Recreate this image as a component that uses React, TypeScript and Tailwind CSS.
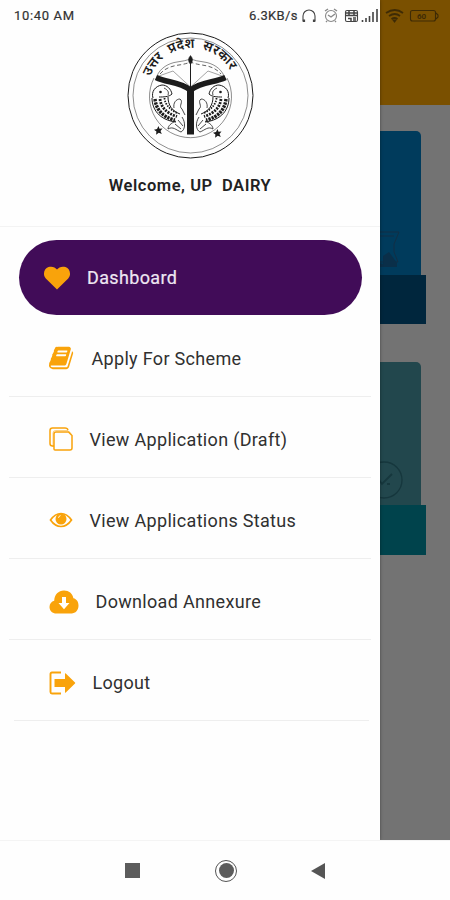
import type { ReactNode } from "react";

const ORANGE = "#f9a30b";

function Emblem() {
  return (
    <svg width="128" height="128" viewBox="0 0 128 128" className="text-[#1c1c1c]" fill="none" stroke="currentColor">
      <defs>
        <path id="motto" d="M24.500 44.500 A44 44 0 0 1 108 48" />
        <g id="fish">
          <path d="M27 66 C25 60 29 54 36 53 C41 53 45 57 46 62 C43 65 37 65 33 65" strokeWidth="1" />
          <circle cx="34.500" cy="60" r="1.300" fill="currentColor" stroke="none" />
          <path d="M38 56 C42 58 43 60 42 63" strokeWidth=".8" />
          <path d="M26 66 C26 77 33 88 50 90" strokeWidth="1" />
          <path d="M42 65 C42 73 46 79 54 82" strokeWidth="1" />
          <path d="M29 67 C30 77 36 85 49 88" strokeWidth="3.400" strokeDasharray="2.400 .9" />
          <path d="M34 67 C35 75 40 81 51 84.500" strokeWidth="2.800" strokeDasharray="2 1.100" />
          <path d="M38.500 66 C39 72 43 77 51 81" strokeWidth="1.800" strokeDasharray="1.500 1.200" />
          <path d="M48 76 C47 71 50 67 54 67 C58 70 52 74 56 77 L59 83" strokeWidth=".8" />
          <path d="M50 89 C45 91 42 94 42 97 C47 94 50 98 55 100 C59 98 60 91 56 85" strokeWidth=".8" />
          <path d="M49 92 L55 97 M52 88 L57 94" strokeWidth=".8" />
        </g>
      </defs>
      <circle cx="64.500" cy="63.500" r="62.500" strokeWidth="1" />
      <circle cx="64.500" cy="63.500" r="57.500" strokeWidth=".5" />
      <path d="M28 46 A41 41 0 1 0 101 46" strokeWidth=".5" />
      <text className="fill-[#1c1c1c] stroke-none text-[13.500px] font-semibold [font-family:'Noto_Sans_Devanagari','Noto_Sans',sans-serif] [word-spacing:4px]">
        <textPath href="#motto">उत्तर प्रदेश सरकार</textPath>
      </text>
      <path d="M31 44 C34 36 43 31 51 30 Q59 29 64.500 27 Q70 29 78 30 C86 31 95 36 98 44" strokeWidth=".5" />
      <path d="M34 42 C39 36 46 34 53 33 Q60 32 64.500 30 Q69 32 76 33 C83 34 90 36 95 42" strokeWidth=".7" strokeDasharray="4 2.500" />
      <path d="M30 45 L47 39 M99 45 L82 39 M47 39 L64.500 55 L82 39" strokeWidth=".4" />
      <path d="M64.500 30 V60" strokeWidth="1" />
      <path d="M64.500 23.500 Q68.500 28 64.500 32.500 Q60.500 28 64.500 23.500Z" fill="currentColor" strokeWidth=".5" />
      <path d="M30 45.500 C41 51 52 49 64.500 58 C77 49 88 51 99.500 45.500" strokeWidth="5.500" />
      <path d="M64.500 56 V102.500" strokeWidth="7" />
      <use href="#fish" />
      <use href="#fish" transform="matrix(-1 0 0 1 129 0)" />
      <g fill="currentColor" stroke="none">
        <path d="m32.500 94 1 2.700 3-.2-2 2.400 1.300 3-3-1.200-2.700 2 .3-3.300-2.400-1.700 3-.6zM91.500 97l1 2.700 3-.2-2 2.400 1.300 3-3-1.200-2.700 2 .3-3.300-2.400-1.700 3-.6z" />
      </g>
    </svg>
  );
}

function HeartIcon() {
  return (
    <svg width="28" height="26" viewBox="0 0 28 26" fill={ORANGE}>
      <path d="M14 24.500 L2.800 13.400 C-.6 9.800 1 3.600 5.500 2.100 C9 .9 12.200 2.300 14 4.500 C15.800 2.300 19 .9 22.500 2.100 C27 3.600 28.600 9.800 25.200 13.400Z" />
    </svg>
  );
}

function BookIcon() {
  return (
    <svg width="26" height="26" viewBox="0 0 1792 1792" fill={ORANGE}>
      <path d="M1639 478q40 57 18 129l-275 906q-19 64-76.500 107.500t-122.500 43.500h-923q-77 0-148.500-53.500t-99.500-131.500q-24-67-2-127 0-4 3-27t4-37q1-8-3-21.500t-3-19.500q2-11 8-21t16.500-23.500 16.500-23.500q23-38 45-91.500t30-91.500q3-10 .5-30t-.5-28q3-11 17-28t17-23q21-36 42-92t25-90q1-9-2.500-32t.5-28q4-13 22-30.500t22-22.500q19-26 42.500-84.500t27.500-96.500q1-8-3-25.500t-2-26.500q2-8 9-18t18-23 17-21q8-12 16.500-30.500t15-35 16-36 19.500-32 26.500-23.500 36-11.500 47.500 5.500l-1 3q38-9 51-9h761q74 0 114 56t18 130l-274 906q-36 119-71.500 153.500t-128.500 34.500h-869q-27 0-38 15-11 16-1 43 24 70 144 70h923q29 0 56-15.500t35-41.500l300-987q7-22 5-57 38 15 59 43zm-1064 2q-4 13 2 22.500t20 9.500h608q13 0 25.500-9.500t16.500-22.500l21-64q4-13-2-22.500t-20-9.500h-608q-13 0-25.500 9.500t-16.500 22.500zm-83 256q-4 13 2 22.500t20 9.500h608q13 0 25.500-9.500t16.500-22.500l21-64q4-13-2-22.500t-20-9.500h-608q-13 0-25.500 9.500t-16.500 22.500z" />
    </svg>
  );
}

function CopiesIcon() {
  return (
    <svg width="24" height="24" viewBox="0 0 24 24" fill="none" stroke={ORANGE} strokeWidth="1.500">
      <path d="M5 19H3.500Q1 19 1 16.500V3.500Q1 1 3.500 1H16q2.500 0 3 2" />
      <path d="M5 22V7Q5 5 7 5h12.500L23 8.500V21q0 2-2 2H6Q5 23 5 22Z" />
      <path d="M4 20V6Q4 3.500 6.500 3.500H19l3 3" strokeWidth=".5" />
    </svg>
  );
}

function EyeIcon() {
  return (
    <svg width="24" height="16" viewBox="0 0 24 16" fill="none" stroke={ORANGE} strokeWidth="1.700">
      <path d="M1.500 8Q6 1.500 12 1.500T22.500 8Q18 14.500 12 14.500T1.500 8Z" />
      <circle cx="12" cy="7" r="5.500" fill={ORANGE} stroke="none" />
      <path d="M9.500 5.800Q9.700 4 11.500 3.600" stroke="white" strokeWidth=".9" />
    </svg>
  );
}

function CloudIcon() {
  return (
    <svg width="30" height="24" viewBox="0 0 30 24" fill={ORANGE}>
      <path d="M7.500 23.500C3.400 23.500.5 20.500.5 16.900c0-3.200 2-5.400 4.700-6.200C5.500 4.700 9.300.5 15 .5c5 0 8.500 3 9.400 7.700 3.300.7 5.100 3.700 5.100 7.400 0 4.700-3 7.900-7 7.900Z" />
      <path d="M13 7h4v6h3.500L15 19.300 9.500 13H13Z" fill="white" />
    </svg>
  );
}

function LogoutIcon() {
  return (
    <svg width="27" height="24" viewBox="0 0 27 24" fill={ORANGE}>
      <path d="M12 1.500H3Q1.500 1.500 1.500 3v18q0 1.500 1.500 1.500h9" fill="none" stroke={ORANGE} strokeWidth="1.900" />
      <path d="M5.500 8H16V2.800q0-1 .8-.2l9.200 9q.5.500 0 1l-9.200 8.900q-.8.700-.8-.2V16H5.500Z" />
    </svg>
  );
}

function MenuRow({ icon, label, gap, line }: { icon: ReactNode; label: string; gap: string; line: string }) {
  return (
    <li className="flex h-[81.200px] flex-col">
      <div className={`flex flex-1 items-center pt-[5px] pl-[48.500px] text-[18px] text-[#303030] ${gap}`}>
        {icon}
        <span>{label}</span>
      </div>
      <div className={`h-px bg-[#eeeeee] ${line}`} />
    </li>
  );
}

function StatusBar() {
  return (
    <div className="absolute inset-x-0 top-0 flex h-8 items-center pl-[14px] text-[13px] text-[#333]">
      <span className="w-[235px] tracking-[0.650px] [-webkit-text-stroke:0.200px]">10:40 AM</span>
      <span className="w-[52px] tracking-[0.350px] [-webkit-text-stroke:0.200px]">6.3KB/s</span>
      <svg width="149" height="20" viewBox="301 6 149 20" fill="none" stroke="#444" strokeWidth="1.100">
        <path d="M304 21h-1v-5a6 6 0 0 1 12 0v5h-1" />
        <path d="M304 19.500v2.500M314 19.500v2.500" strokeWidth="2.200" />
        <g stroke="#888">
          <circle cx="331" cy="16" r="5.500" />
          <path d="M325 11l3-2M337 11l-3-2M328 15l3 2 4-3M327 21l-1 1M335 21l1 1" strokeWidth="1.400" />
        </g>
        <rect x="345.500" y="10.500" width="12" height="11" rx="1.500" />
        <path d="M346 13h11M346 15.500h11M349 11v4M354 11v4M348 18.500h3v3M353 18h3M353 20h3" strokeWidth="1.500" />
        <path d="M362.500 22v-2M366 22v-4M369.500 22v-6M373 22V12M377 22V9" strokeWidth="1.600" />
        <g stroke="#3e2b05">
          <path d="M386 13q9-6 17 0M389 16q6-4 11 0M391.500 19q3-2 6 0" strokeWidth="1.800" />
          <path d="m394.500 22-1.500-2h3Z" fill="#3e2b05" />
          <rect x="410.500" y="10.500" width="25" height="10.500" rx="2" />
          <path d="M436 13l2 2v2l-2 2" />
        </g>
        <text x="417" y="19" className="fill-[#3e2b05] stroke-none text-[8px] font-bold">60</text>
      </svg>
    </div>
  );
}

function Backdrop() {
  return (
    <div className="flex h-[840px] flex-col bg-[#737373]">
      <div className="h-[105px] bg-[#7a5000]" />
      <div className="mt-[26px] h-[193px] w-[426px]">
        <div className="mr-[5px] flex h-[144px] items-end justify-end rounded-tr-[5px] bg-[#003b5c] pr-[21px] pb-[7px]">
          <svg width="28" height="38" viewBox="0 0 28 38" fill="none" stroke="#122f45" strokeWidth="1">
            <path d="M2 2h25l-5 12v8l4 10H3M2 6h20" />
            <path d="M11 34v-8l6-4 8 11v4H3v-5Z" fill="#0a2f49" stroke="none" />
          </svg>
        </div>
        <div className="h-[49px] bg-[#00263d]" />
      </div>
      <div className="mt-[38px] h-[193px] w-[426px]">
        <div className="mr-[5px] flex h-[143px] items-end justify-end rounded-tr-[5px] bg-[#22474d] pr-[18px] pb-[6px]">
          <svg width="38" height="38" viewBox="0 0 38 38" fill="none" stroke="#16373d" strokeWidth="1.300">
            <circle cx="19" cy="19" r="18" />
            <path d="m14 19 3 4 10-10M22 23h3" strokeWidth="1.800" />
          </svg>
        </div>
        <div className="h-[50px] bg-[#00434c]" />
      </div>
    </div>
  );
}

export default function App() {
  return (
    <div className="relative h-[900px] w-[450px] overflow-hidden bg-white [font-family:Roboto,sans-serif]">
      <Backdrop />
      <aside className="absolute top-0 left-0 flex h-[840px] w-[380px] flex-col bg-[#fefefe] shadow-[0_0_3px_rgba(0,0,0,0.4)]">
        <header className="flex h-[227px] flex-col items-center border-b border-[#f3f3f3] pt-[32px]">
          <Emblem />
          <h1 className="mt-[13px] text-[16.500px] leading-[25px] font-semibold tracking-[0.550px] whitespace-pre text-[#222]">Welcome, UP  DAIRY</h1>
        </header>
        <nav>
          <a className="mt-[13px] ml-[19px] flex h-[75px] w-[343px] items-center gap-[16px] rounded-full bg-[#410c58] pl-[24px] text-[18px] tracking-[0.350px] text-[#eee6f2] [-webkit-text-stroke:0.200px]">
            <HeartIcon />
            <span>Dashboard</span>
          </a>
          <ul className="pt-[0.500px] tracking-[0.320px]">
            <MenuRow icon={<BookIcon />} label="Apply For Scheme" gap="gap-[17px]" line="mx-[9px]" />
            <MenuRow icon={<CopiesIcon />} label="View Application (Draft)" gap="gap-[17px]" line="mx-[9px]" />
            <MenuRow icon={<EyeIcon />} label="View Applications Status" gap="gap-[17px]" line="mx-[9px]" />
            <MenuRow icon={<CloudIcon />} label="Download Annexure" gap="gap-[17px]" line="mx-[9px]" />
            <MenuRow icon={<LogoutIcon />} label="Logout" gap="gap-[17px]" line="mr-[11px] ml-[14px]" />
          </ul>
        </nav>
      </aside>
      <StatusBar />
      <footer className="relative flex h-[60px] items-center border-t border-[#f4f4f4] bg-[#fefefe] pl-[125px]">
        <div className="mr-[75px] h-[15px] w-[15px] bg-[#5c5c5c]" />
        <div className="mr-[74px] flex h-[22px] w-[22px] items-center justify-center rounded-full border border-[#555]">
          <div className="h-[15px] w-[15px] rounded-full bg-[#5c5c5c]" />
        </div>
        <svg width="15" height="18" viewBox="0 0 15 18" fill="#555">
          <path d="M14 1v16L0 9Z" />
        </svg>
      </footer>
    </div>
  );
}
